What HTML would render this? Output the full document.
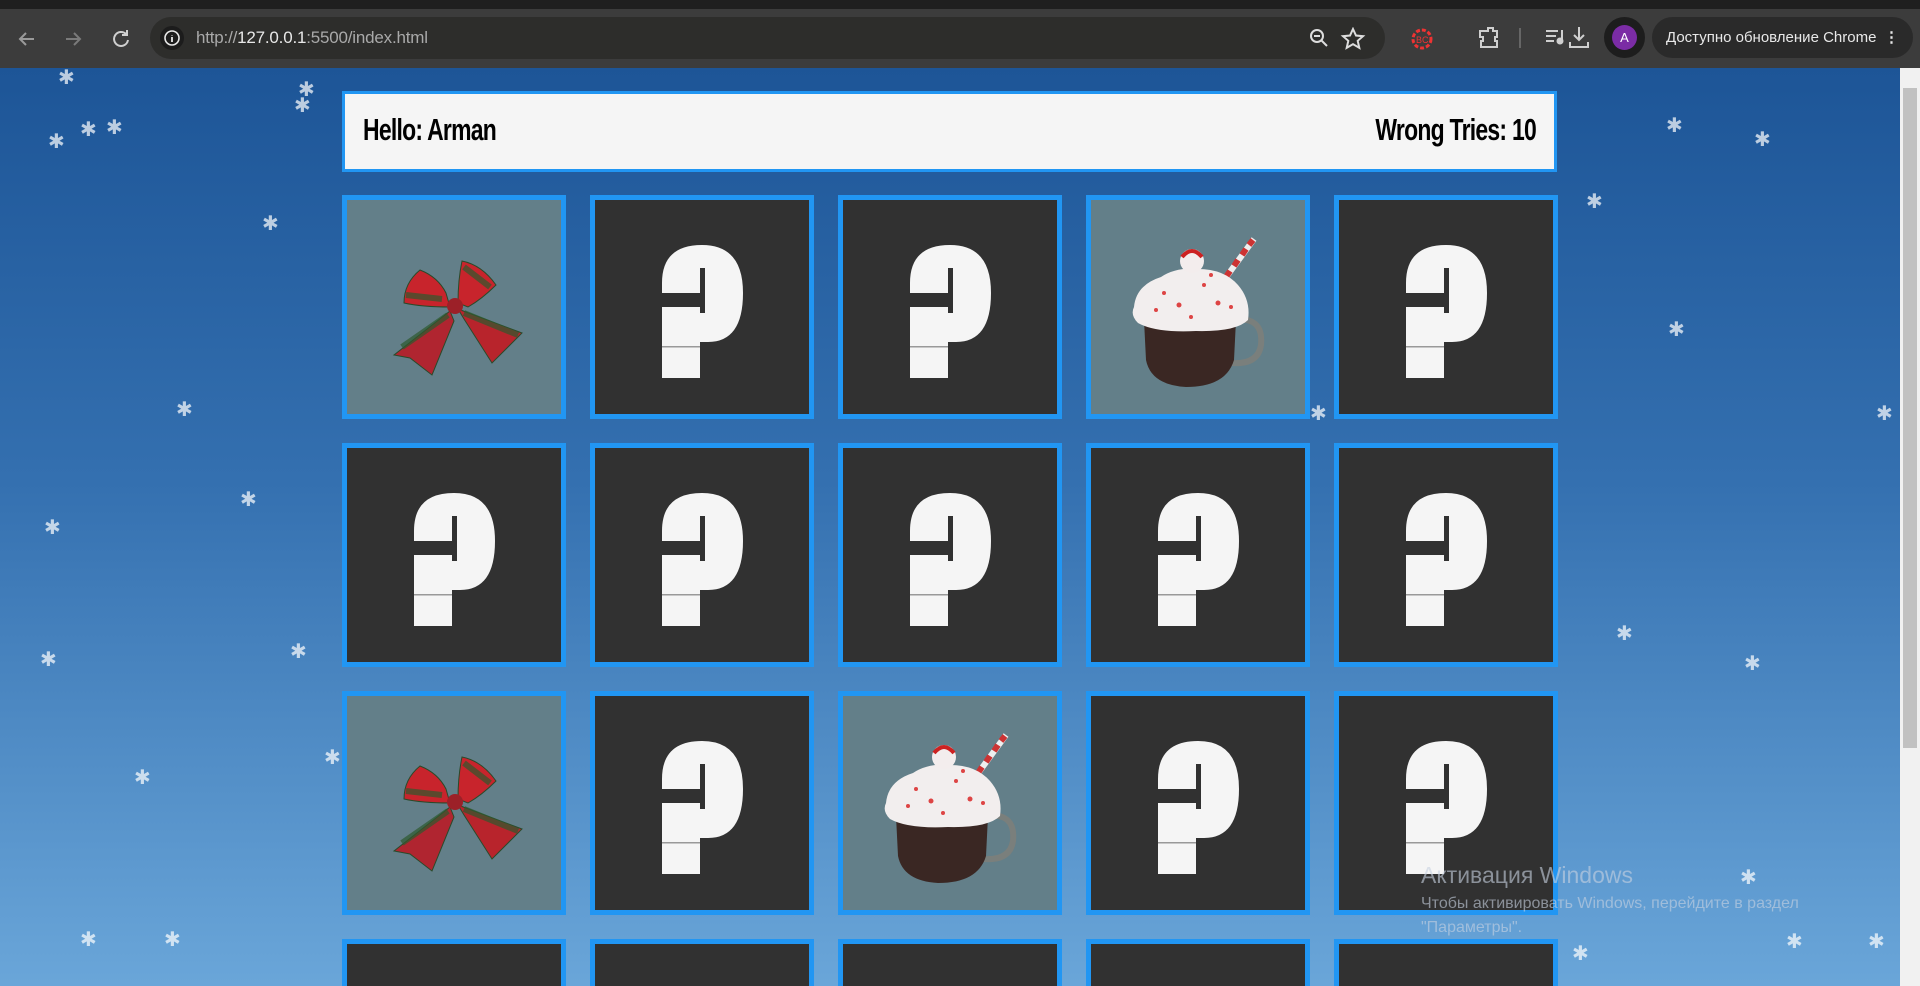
<!DOCTYPE html>
<html><head><meta charset="utf-8"><style>
*{margin:0;padding:0;box-sizing:border-box}
html,body{width:1920px;height:986px;overflow:hidden}
body{font-family:"Liberation Sans",sans-serif;background:#3c3c3c;position:relative}
#tabs{position:absolute;left:0;top:0;width:1920px;height:9px;background:#1f1f1f}
#bar{position:absolute;left:0;top:9px;width:1920px;height:59px;background:#3c3c3c}
#url{position:absolute;left:150px;top:17px;width:1235px;height:42px;border-radius:21px;background:#2d2d2b}
#url .t{position:absolute;left:46px;top:11px;font-size:17px;color:#a9a9a9;letter-spacing:-0.2px}
#url .t b{font-weight:normal;color:#e8e8e8}
#page{position:absolute;left:0;top:68px;width:1900px;height:918px;background:linear-gradient(#1d5597,#3470b0 45%,#6aa6d9);overflow:hidden}
#sb{position:absolute;left:1900px;top:68px;width:20px;height:918px;background:#f1f1f1}
#sb .th{position:absolute;left:3px;top:20px;width:14px;height:660px;background:#c1c1c1}
#hdr{position:absolute;left:342px;top:23px;width:1215px;height:81px;background:#f5f5f5;border:3px solid #2196f3;font-weight:bold;font-size:31px;font-family:"Liberation Sans Narrow","Liberation Sans",sans-serif}
#hdr span{position:absolute;top:18px;letter-spacing:-1px;display:inline-block;transform:scaleX(0.74)}
.c{position:absolute;width:224px;height:224px;border:5px solid #2196f3;background:#313131}
.c.o{background:#637f89}
.c svg{position:absolute;left:-5px;top:-5px}
.s{position:absolute;color:#fff;font-size:20px;line-height:1;opacity:.7}
.wm{position:absolute;color:rgba(200,210,225,.6)}
</style></head><body>
<div id="tabs"></div>
<div id="bar">
<svg style="position:absolute;left:14px;top:17px" width="130" height="26" fill="none" stroke="#9a9a9a" stroke-width="2"><path d="M20 13H6M12 7l-6 6 6 6"/><path d="M52 13h14M60 7l6 6-6 6" stroke="#7a7a7a"/><path d="M112 8a7 7 0 1 0 2 6M113 4v5h-5" stroke="#cfcfcf"/></svg>
</div>
<div id="url"><svg style="position:absolute;left:9px;top:8px" width="26" height="26"><circle cx="13" cy="13" r="12" fill="#1c1c1c"/><circle cx="13" cy="13" r="7" fill="none" stroke="#e8e8e8" stroke-width="1.6"/><path d="M13 10v0.5M13 12v5" stroke="#e8e8e8" stroke-width="1.8"/></svg><div class="t">http://<b>127.0.0.1</b>:5500/index.html</div>
<svg style="position:absolute;left:1158px;top:10px" width="70" height="24" fill="none" stroke="#ddd" stroke-width="2"><circle cx="9" cy="9" r="6"/><path d="M13 13l6 6M6 9h6"/><path d="M45 2l3 6.5 7 .7-5.3 4.6 1.6 7-6.3-3.7-6.3 3.7 1.6-7L35 9.2l7-.7z"/></svg></div>
<svg style="position:absolute;left:1400px;top:20px" width="200" height="36" fill="none" stroke="#cfcfcf" stroke-width="2"><circle cx="22" cy="19" r="9" stroke="#e33" stroke-width="3" stroke-dasharray="4 2"/><text x="16" y="23" font-size="9" fill="#e33" stroke="none" font-family="Liberation Sans">BC</text><path d="M80 11h8v-3h5v3h4v6h-2v4h2v6H81v-6h2v-4h-3z"/><path d="M120 8v20" stroke="#666"/><path d="M146 11h12M146 16h10M146 21h8M162 10v10" /><circle cx="160" cy="21" r="2.5" fill="#cfcfcf"/><path d="M179 7v13M174 15l5 5 5-5M170 22v5h18v-5"/></svg>
<div style="position:absolute;left:1604px;top:17px;width:41px;height:41px;border-radius:50%;background:#1d1d1d"></div>
<div style="position:absolute;left:1612px;top:25px;width:25px;height:25px;border-radius:50%;background:#7b2ca5;color:#fff;font-size:13px;text-align:center;line-height:25px">A</div>
<div style="position:absolute;left:1652px;top:17px;width:261px;height:41px;border-radius:21px;background:#2a2a2a;color:#e8e8e8;font-size:15px;line-height:41px;padding-left:14px">Доступно обновление Chrome<span style="position:absolute;right:14px;top:0;font-weight:bold">⋮</span></div>

<div id="page">
<div id="hdr"><span style="left:18px;transform-origin:0 0">Hello: Arman</span><span style="right:18px;transform-origin:100% 0">Wrong Tries: 10</span></div>
<div id="cards"></div>
<div class="wm" style="left:1421px;top:794px;font-size:23px">Активация Windows</div>
<div class="wm" style="left:1421px;top:827px;font-size:16px">Чтобы активировать Windows, перейдите в раздел</div>
<div class="wm" style="left:1421px;top:851px;font-size:16px">"Параметры".</div>
</div>
<div id="sb"><div class="th"></div></div>
<script>
var Q='<svg width="224" height="224"><path d="M72 88Q72 50 112 50Q153 50 153 98Q153 147 118 147L110 147L110 183L72 183Z" fill="#f5f5f5"/><rect x="72" y="98" width="38" height="14" fill="#313131"/><rect x="110" y="73" width="5" height="45" fill="#313131"/><rect x="72" y="151" width="38" height="1.5" fill="#999"/></svg>';
var BOW='<svg width="224" height="224"><g stroke="#2a4a2a" stroke-width="1"><path d="M108 112Q80 112 62 108Q62 88 78 75Q96 82 104 98Z" fill="#c8242c"/><path d="M116 108Q116 85 120 66Q140 70 154 90Q140 104 126 112Z" fill="#c8242c"/><path d="M108 116L52 160L68 163L90 180L112 126Z" fill="#b02530"/><path d="M116 114L180 138L150 168L122 124Z" fill="#b8242c"/><path d="M64 100L100 104M122 72L148 92M60 152L106 120M122 118L176 140" stroke="#2d5a2e" stroke-width="6" opacity=".7"/></g><circle cx="113" cy="111" r="8" fill="#9c2028"/></svg>';
var MUG='<svg width="224" height="224"><path d="M145 125Q178 120 175 150Q172 170 145 168" fill="none" stroke="#7a7f7c" stroke-width="6"/><path d="M58 125L150 125L148 165Q140 192 100 192Q65 190 60 165Z" fill="#3a2723"/><path d="M138 85L168 44" stroke="#eee" stroke-width="6"/><path d="M140 82L144 76M148 71L152 65M156 60L160 54M163 50L167 45" stroke="#c33" stroke-width="6"/><path d="M48 112Q50 90 75 82Q90 72 112 74Q138 74 152 90Q165 105 162 125Q150 137 110 136Q70 138 52 128Q44 120 48 112Z" fill="#f2eeee"/><circle cx="106" cy="66" r="12" fill="#f3eded"/><path d="M96 62Q106 50 116 62" stroke="#c22" stroke-width="4" fill="none"/><g fill="#d44"><circle cx="78" cy="98" r="2"/><circle cx="93" cy="110" r="2.5"/><circle cx="118" cy="90" r="2"/><circle cx="132" cy="108" r="2.5"/><circle cx="105" cy="122" r="2"/><circle cx="145" cy="112" r="2"/><circle cx="70" cy="115" r="2"/><circle cx="125" cy="80" r="2"/></g></svg>';
var open={'0,0':BOW,'0,3':MUG,'2,0':BOW,'2,2':MUG};
var h='';
for(var r=0;r<4;r++)for(var c=0;c<5;c++){var k=r+','+c;var x=342+c*248,y=127+r*248;
h+='<div class="c'+(open[k]?' o':'')+'" style="left:'+x+'px;top:'+y+'px">'+(open[k]||Q)+'</div>';}
var sn=[[58,0],[298,12],[80,52],[106,50],[48,64],[294,28],[262,146],[176,332],[240,422],[44,450],[290,574],[40,582],[134,700],[324,680],[80,862],[164,862],[1666,48],[1754,62],[1586,124],[1668,252],[1876,336],[1616,556],[1744,586],[1740,800],[1786,864],[1868,864],[1572,876],[1310,336]];
sn.forEach(function(p){h+='<div class="s" style="left:'+p[0]+'px;top:'+p[1]+'px">✱</div>';});
document.getElementById('cards').innerHTML=h;
</script>
</body></html>
